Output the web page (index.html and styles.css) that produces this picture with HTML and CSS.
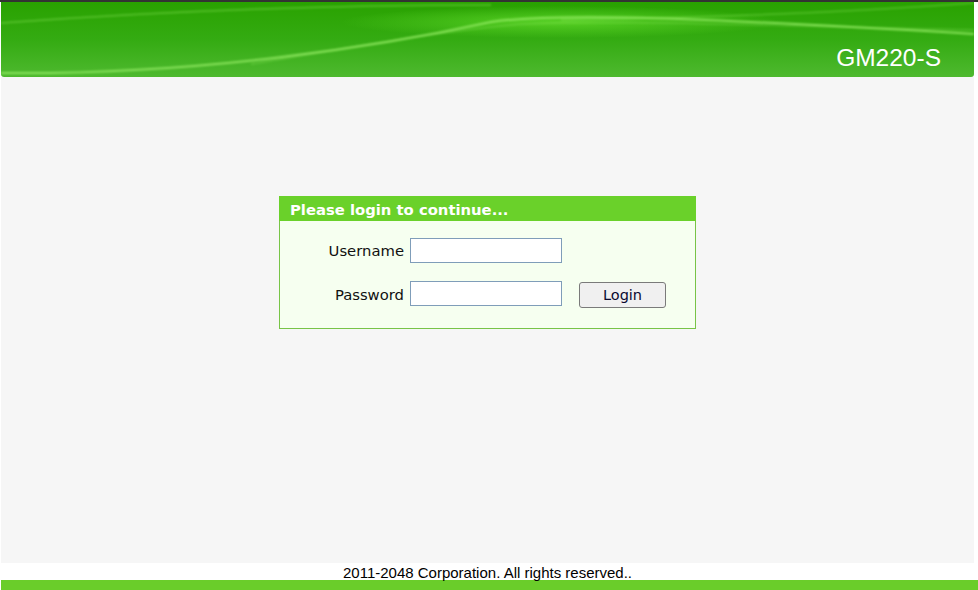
FILE: index.html
```html
<!DOCTYPE html>
<html lang="en">
<head>
    <meta charset="UTF-8">
    <title>GM220-S Login</title>
    <link rel="stylesheet" href="styles.css">
</head>
<body>
    <div class="top-line"></div>
    <div class="header">
        <svg class="header-bg" viewBox="0 0 973 75" preserveAspectRatio="none">
            <defs>
                <linearGradient id="bg" x1="0" y1="0" x2="0" y2="1">
                    <stop offset="0" stop-color="#29a200"/>
                    <stop offset="0.5" stop-color="#34ab12"/>
                    <stop offset="1" stop-color="#4eb92f"/>
                </linearGradient>
                <radialGradient id="glow" cx="0.5" cy="0.5" r="0.5">
                    <stop offset="0" stop-color="#5fd92a" stop-opacity="0.8"/>
                    <stop offset="1" stop-color="#5fd92a" stop-opacity="0"/>
                </radialGradient>
                <filter id="soft"><feGaussianBlur stdDeviation="1"/></filter>
            </defs>
            <rect width="973" height="75" fill="url(#bg)"/>
            <ellipse cx="560" cy="20" rx="220" ry="16" fill="url(#glow)"/>
            <g fill="none" stroke="#9bf06a" filter="url(#soft)">
                <path d="M0,21 C150,10 300,3 490,3" stroke-opacity="0.4" stroke-width="1.5"/>
                <path d="M0,71 C200,73 380,44 490,20 C560,10 700,16 973,32" stroke-opacity="0.8" stroke-width="2"/>
                <path d="M250,62 C350,46 430,30 520,22 C600,18 700,22 973,28" stroke-opacity="0.3" stroke-width="1.5"/>
                <path d="M560,18 C700,16 850,10 973,1" stroke-opacity="0.35" stroke-width="1.5"/>
            </g>
        </svg>
        <div class="model">GM220-S</div>
    </div>

    <div class="main">
        <div class="login-box">
            <div class="login-title">Please login to continue...</div>
            <form class="login-form" onsubmit="return false">
                <label class="label" for="username">Username</label>
                <input class="field" type="text" id="username">
                <span></span>
                <label class="label" for="password">Password</label>
                <input class="field" type="password" id="password">
                <button class="btn-login" type="submit">Login</button>
            </form>
        </div>
    </div>

    <div class="footer">2011-2048 Corporation. All rights reserved..</div>
    <div class="bottom-bar"></div>
</body>
</html>
```

FILE: styles.css
```css
body {
    margin: 0;
    background-color: #fff;
    font-family: "DejaVu Sans", Verdana, sans-serif;
    overflow: hidden;
}

.top-line {
    height: 2px;
    background-color: #333;
}

.header {
    position: relative;
    margin-left: 1px;
    width: 973px;
    height: 75px;
    border-radius: 0 0 3px 3px;
    overflow: hidden;
    display: flex;
    justify-content: flex-end;
    align-items: flex-end;
}

.header-bg {
    position: absolute;
    left: 0;
    top: 0;
    width: 100%;
    height: 100%;
}

.model {
    position: relative;
    font-family: "Liberation Sans", Arial, sans-serif;
    font-size: 24.5px;
    color: #fff;
    padding: 0 33px 5px 0;
}

.main {
    margin-left: 1px;
    width: 973px;
    height: 486px;
    background-color: #f6f6f6;
    padding-top: 119px;
    box-sizing: border-box;
}

.login-box {
    width: 417px;
    margin: 0 auto;
    border: 1px solid #78c447;
    border-top: none;
    background-color: #f6fff0;
    box-sizing: border-box;
}

.login-title {
    margin: 0 -1px;
    height: 25px;
    background-color: #6ad12a;
    color: #fff;
    font-weight: bold;
    font-size: 14.8px;
    line-height: 27px;
    padding-left: 11px;
}

.login-form {
    display: grid;
    grid-template-columns: 124px 152px 87px;
    column-gap: 6px;
    row-gap: 18px;
    align-items: start;
    margin: 0;
    padding: 17px 0 20px;
}

.label {
    align-self: center;
    text-align: right;
    font-size: 14.8px;
    color: #111;
}

.field {
    width: 152px;
    height: 25px;
    margin: 0;
    border: 1px solid #7f9db9;
    background-color: #fff;
    box-sizing: border-box;
}

.btn-login {
    margin: 1px 0 0 11px;
    width: 87px;
    height: 26px;
    padding: 0;
    border: 1px solid #7a7a7a;
    border-radius: 3px;
    background-color: #f0f0f0;
    font-family: "DejaVu Sans", Verdana, sans-serif;
    font-size: 14.5px;
    color: #0a0a30;
    cursor: pointer;
}

.footer {
    margin-left: 1px;
    width: 973px;
    height: 17px;
    text-align: center;
    font-family: "Liberation Sans", Arial, sans-serif;
    font-size: 15px;
    line-height: 19px;
    color: #000;
}

.bottom-bar {
    margin-left: 1px;
    height: 10px;
    background-color: #6acd2a;
}
```
